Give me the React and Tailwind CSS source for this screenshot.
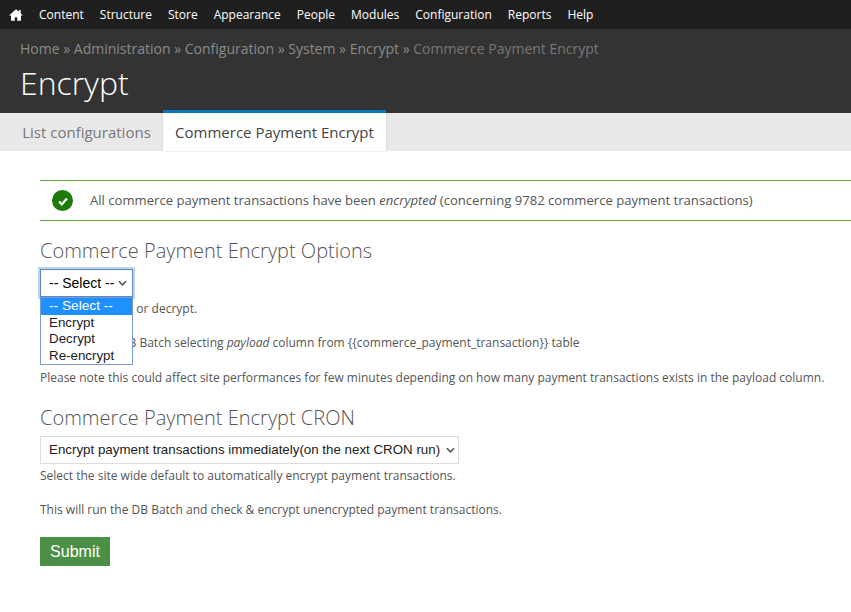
import React from 'react';

const navItems = ['Content', 'Structure', 'Store', 'Appearance', 'People', 'Modules', 'Configuration', 'Reports', 'Help'];
const crumbs = ['Home', 'Administration', 'Configuration', 'System', 'Encrypt'];

function Chevron({ className }) {
  return (
    <svg viewBox="0 0 10 6" className={className} fill="none" stroke="currentColor" strokeWidth="1.8">
      <path d="M1 1l4 4 4-4" />
    </svg>
  );
}

export default function App() {
  return (
    <div className="min-h-[612px] bg-white font-['Open_Sans',sans-serif] text-xs text-[#555]">
      {/* Admin toolbar */}
      <div className="flex h-[29px] items-center bg-[#1f1f1f] pl-[9px] text-white">
        <svg viewBox="0 0 24 24" className="mr-4 h-[14px] w-[14px]" fill="white">
          <path d="M12 2L0 13h3.5v9H10v-6h4v6h6.5v-9H24l-4-3.7V3.5h-3v3z" />
        </svg>
        <nav className="flex gap-4">
          {navItems.map((item) => (
            <a key={item} className="leading-none">{item}</a>
          ))}
        </nav>
      </div>

      {/* Page header */}
      <header className="h-[84px] bg-[#333] px-5 pt-[10px]">
        <div className="text-sm leading-5 text-[#8a8a8a]">
          {crumbs.map((c) => (
            <span key={c}>{c} » </span>
          ))}
          <span className="text-[#777]">Commerce Payment Encrypt</span>
        </div>
        <h1 className="mt-1 text-[32px] font-light leading-10 text-white">Encrypt</h1>
      </header>

      {/* Tabs */}
      <div className="flex h-[38px] bg-[#e9e9e9] pl-[10px]">
        <a className="flex w-[153px] items-center justify-center text-[15px] text-[#777]">List configurations</a>
        <a className="-mt-[3px] flex h-[41px] w-[223px] items-center justify-center border-t-[3px] border-[#0678be] bg-white text-[15px] text-[#444] shadow-[0_0_2px_rgba(0,0,0,0.15)]">
          Commerce Payment Encrypt
        </a>
      </div>

      <main className="pl-10 pt-[29px]">
        {/* Status message */}
        <div className="flex h-[41px] items-center border-y border-[#5fa83d] pl-3">
          <span className="flex h-[21px] w-[21px] items-center justify-center rounded-full bg-[#1e7a0a]">
            <svg viewBox="0 0 12 12" className="h-3 w-3" fill="none" stroke="white" strokeWidth="2.2">
              <path d="M2 6.5l2.8 2.8L10 3.5" />
            </svg>
          </span>
          <p className="ml-[17px] text-[13.1px]">
            All commerce payment transactions have been <em>encrypted</em> (concerning 9782 commerce payment transactions)
          </p>
        </div>

        <h2 className="mt-[16px] text-xl font-light leading-7 text-[#555]">Commerce Payment Encrypt Options</h2>

        <div className="relative mt-[4px]">
          <div className="flex h-[28px] w-[93px] items-center justify-between border border-[#5b87c5] pl-2 pr-[5px] font-['Liberation_Sans',sans-serif] text-sm text-black shadow-[0_0_0_2px_#b9d7f5]">
            <span>-- Select --</span>
            <Chevron className="h-[6px] w-[9px] text-[#555]" />
          </div>

          {/* Open select list */}
          <ul className="absolute left-0 top-[28px] z-10 w-[93px] border border-[#7a9bd0] bg-white font-['Liberation_Sans',sans-serif] text-[13.33px] leading-[16.5px] text-[#222]">
            <li className="bg-[#1e90ff] pl-2 text-[13.7px] text-white">-- Select --</li>
            <li className="pl-2">Encrypt</li>
            <li className="pl-2">Decrypt</li>
            <li className="pl-2">Re-encrypt</li>
          </ul>

          <p className="mt-[2px] leading-5">Select to encrypt or decrypt.</p>
          <p className="mt-[14px] leading-5">
            This will run a DB Batch selecting <em>payload</em> column from {'{{commerce_payment_transaction}}'} table
          </p>
          <p className="mt-[15px] leading-5">
            Please note this could affect site performances for few minutes depending on how many payment transactions exists in the payload column.
          </p>
        </div>

        <h2 className="mt-[16px] text-xl font-light leading-7 text-[#555]">Commerce Payment Encrypt CRON</h2>

        <div className="mt-1 flex h-7 w-[419px] items-center justify-between border border-[#ddd] pl-2 pr-[3px] font-['Liberation_Sans',sans-serif] text-[13.33px] text-[#222]">
          <span className="whitespace-nowrap">Encrypt payment transactions immediately(on the next CRON run)</span>
          <Chevron className="h-[6px] w-[9px] text-[#555]" />
        </div>
        <p className="mt-[2px] leading-5">Select the site wide default to automatically encrypt payment transactions.</p>
        <p className="mt-[14px] leading-5">This will run the DB Batch and check &amp; encrypt unencrypted payment transactions.</p>

        <button className="mt-[17px] h-[29px] w-[70px] bg-[#4c8f47] font-['Liberation_Sans',sans-serif] text-base text-white">
          Submit
        </button>
      </main>
    </div>
  );
}
